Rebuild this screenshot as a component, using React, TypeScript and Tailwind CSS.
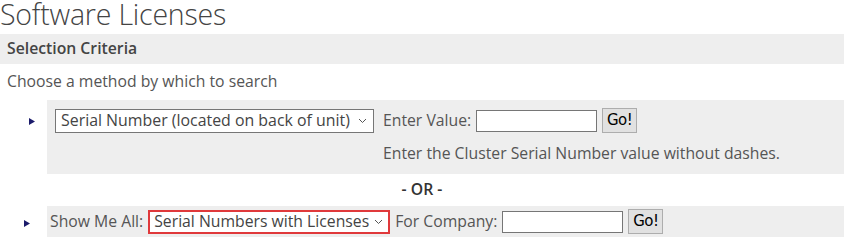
import React from "react";

const font = { fontFamily: '"Open Sans", "Noto Sans", sans-serif' };

function Tri() {
  return (
    <svg width="6" height="7" viewBox="0 0 6 7" className="block">
      <polygon points="0,0 6,3.5 0,7" fill="#1b1b6b" />
    </svg>
  );
}

function Chevron() {
  return (
    <svg width="9" height="6" viewBox="0 0 9 6" className="block">
      <polyline points="1,1 4.5,4.5 8,1" fill="none" stroke="#555" strokeWidth="1" />
    </svg>
  );
}

function GoBtn() {
  return (
    <button className="h-[25px] w-[35px] bg-[#e1e1e1] border border-[#adadad] text-[15px] text-black leading-none font-['DejaVu_Sans',sans-serif] tracking-[-0.5px] flex items-center justify-center">
      Go!
    </button>
  );
}

export default function App() {
  return (
    <div className="w-[844px] h-[244px] bg-white text-[#555] overflow-hidden font-['Open_Sans',sans-serif]" style={font}>
      <div className="h-[34px]">
        <h1 className="text-[28.5px] leading-[28px] text-[#444] font-light tracking-[-0.2px]">Software Licenses</h1>
      </div>
      <div className="h-[30px] bg-[#eeeeee] flex items-center pl-[7px] text-[15.75px] font-semibold text-[#444]">
        Selection Criteria
      </div>
      <div className="h-[36px] flex items-center pl-[7px] text-[15.75px]">Choose a method by which to search</div>
      <div className="flex">
        <div className="w-[47px] shrink-0 pt-[18px] pl-[29px]">
          <Tri />
        </div>
        <div className="flex-1 bg-[#eeeeee] h-[74px] pl-[8px] pt-[8px]">
          <div className="flex items-center">
            <div className="w-[319px] h-[24px] border border-[#767676] bg-white flex items-center justify-between pl-[5px] pr-[6px] text-[15.9px] text-[#444]">
              <span>Serial Number (located on back of unit)</span>
              <Chevron />
            </div>
            <span className="ml-[9px] text-[15.75px]">Enter Value:</span>
            <div className="ml-[5px] w-[121px] h-[22px] border border-[#767676] bg-white" />
            <div className="ml-[5px]"><GoBtn /></div>
          </div>
          <div className="ml-[328px] mt-[10px] text-[15.75px] leading-[20px]">Enter the Cluster Serial Number value without dashes.</div>
        </div>
      </div>
      <div className="h-[32px] flex items-center justify-center text-[15.75px] font-semibold text-[#333]">- OR -</div>
      <div className="flex">
        <div className="w-[47px] shrink-0 pt-[14px] pl-[24px]">
          <Tri />
        </div>
        <div className="flex-1 bg-[#eeeeee] h-[31px] pl-[3px] flex items-center">
          <span className="text-[15.75px]">Show Me All:</span>
          <div className="ml-[5px] w-[242px] h-[24px] border-2 border-[#e0393b] bg-white flex items-center justify-between pl-[4px] pr-[5px] text-[15.75px] text-[#444]">
            <span>Serial Numbers with Licenses</span>
            <Chevron />
          </div>
          <span className="ml-[5px] text-[15.75px]">For Company:</span>
          <div className="ml-[5px] w-[121px] h-[22px] border border-[#767676] bg-white" />
          <div className="ml-[5px]"><GoBtn /></div>
        </div>
      </div>
    </div>
  );
}
